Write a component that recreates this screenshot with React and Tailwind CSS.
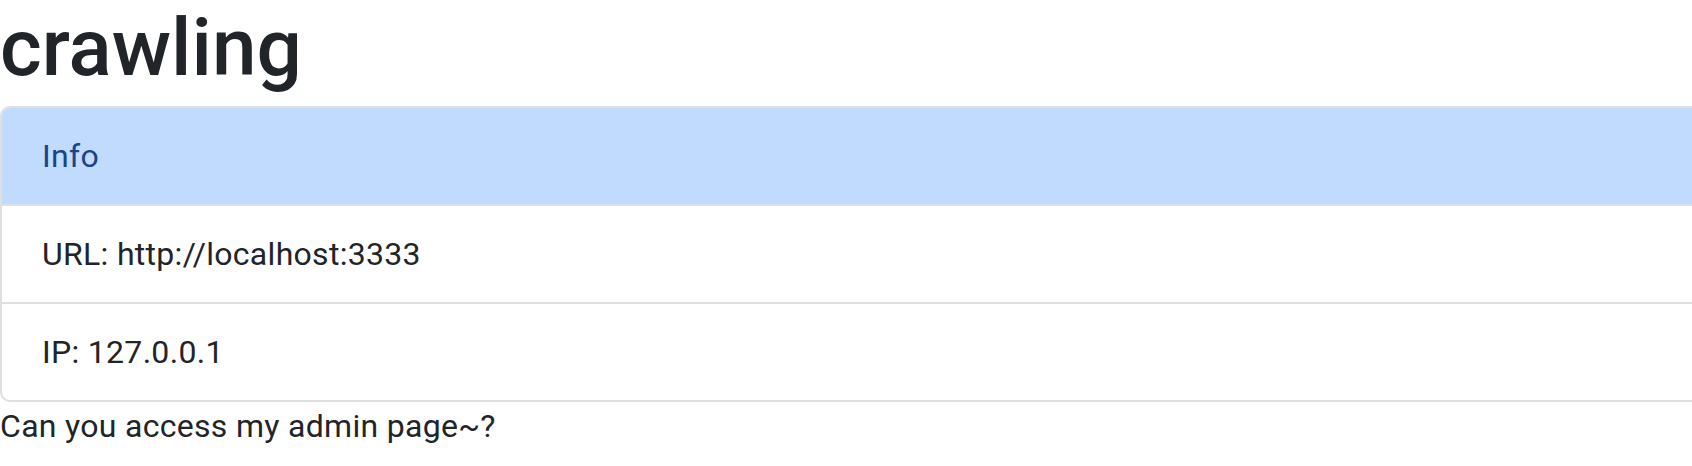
import React from 'react';

export default function App() {
  return (
    <div className="w-full overflow-hidden bg-white text-[#212529] text-[32px] leading-[48px] tracking-[0.3px]" style={{ fontFamily: 'Roboto, "Noto Sans", sans-serif' }}>
      <h1 className="text-[80px] leading-[96px] font-medium mb-[10px] tracking-normal">crawling</h1>
      <ul className="w-[1800px] border-2 border-[#dfdfdf] rounded-[10px] overflow-hidden">
        <li className="px-[40px] py-[24px] bg-[#c0dbfe] text-[#1b4386] border-t-2 border-t-[#a3bfdf] -mt-[2px]">Info</li>
        <li className="px-[40px] py-[24px] border-t-2 border-[#dfdfdf]">URL: http://localhost:3333</li>
        <li className="px-[40px] py-[24px] border-t-2 border-[#dfdfdf]">IP: 127.0.0.1</li>
      </ul>
      <p>Can you access my admin page~?</p>
    </div>
  );
}
